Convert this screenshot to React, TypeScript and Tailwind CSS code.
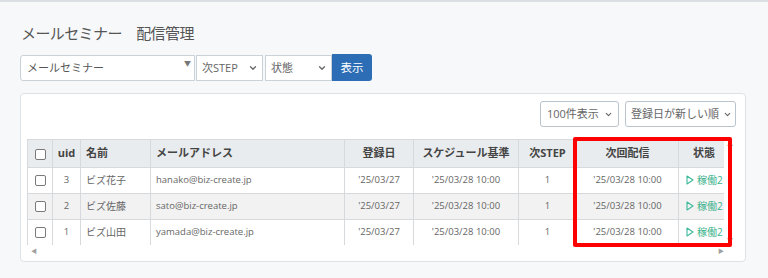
import { ChevronDown } from "lucide-react";

type Row = {
  uid: number;
  name: string;
  email: string;
  created: string;
  schedule: string;
  step: number;
  next: string;
};

const rows: Row[] = [
  { uid: 3, name: "ビズ花子", email: "hanako@biz-create.jp", created: "'25/03/27", schedule: "'25/03/28 10:00", step: 1, next: "'25/03/28 10:00" },
  { uid: 2, name: "ビズ佐藤", email: "sato@biz-create.jp", created: "'25/03/27", schedule: "'25/03/28 10:00", step: 1, next: "'25/03/28 10:00" },
  { uid: 1, name: "ビズ山田", email: "yamada@biz-create.jp", created: "'25/03/27", schedule: "'25/03/28 10:00", step: 1, next: "'25/03/28 10:00" },
];

function Checkbox() {
  return <span className="inline-block w-[11px] h-[11px] border border-[#7a7a7a] rounded-[2px] bg-white align-middle" />;
}

function PlayOutline() {
  return (
    <svg width="8" height="10" viewBox="0 0 8 10" className="inline-block mr-[3px] -mt-[2px]">
      <path d="M1 1 L7 5 L1 9 Z" fill="none" stroke="#3bb99a" strokeWidth="1.1" strokeLinejoin="round" />
    </svg>
  );
}

export default function App() {
  return (
    <div
      className="min-h-screen bg-[#f7f8fa] border-t-2 border-[#dcdfe4] text-[#555]"
      style={{ fontFamily: "'Open Sans', 'Noto Sans CJK JP', sans-serif" }}
    >
      <div className="pl-5 pr-[22px] pt-[21px]">
        {/* Title */}
        <h1 className="text-[15px] leading-[20px] tracking-[-0.6px] pl-[1px] text-[#555]">メールセミナー　配信管理</h1>

        {/* Filter row */}
        <div className="mt-[12px] flex h-[26px] text-[11px]">
          <div className="relative w-[175px] h-full bg-white border border-[#c9d2d9] rounded-l-[3px] flex items-center pl-[6px] text-[#555]">
            メールセミナー
            <span className="absolute right-[3px] top-[3px] text-[7px] text-[#777]">▼</span>
          </div>
          <div className="ml-[1px] w-[67px] h-full bg-white border border-[#c9d2d9] flex items-center justify-between pl-[5px] pr-[4px] text-[#666]">
            次STEP
            <ChevronDown size={10} strokeWidth={3} className="text-[#666]" />
          </div>
          <div className="ml-[2px] w-[67px] h-full bg-white border border-[#c9d2d9] flex items-center justify-between pl-[5px] pr-[4px] text-[#666]">
            状態
            <ChevronDown size={10} strokeWidth={3} className="text-[#666]" />
          </div>
          <button className="w-[40px] h-[27px] -mt-[1px] bg-[#2c6db5] text-white text-[11.5px] rounded-r-[3px]">
            表示
          </button>
        </div>

        {/* Card */}
        <div className="mt-[12px] bg-white border border-[#dde2e6] rounded-[4px] pl-[6px] pr-[9px] pt-[7px] pb-[5px]">
          <div className="flex justify-end gap-[6px] text-[11px] text-[#666]">
            <div className="w-[79px] h-[26px] border border-[#b9c3cc] rounded-[3px] flex items-center justify-between pl-[6px] pr-[5px]">
              100件表示
              <ChevronDown size={9} strokeWidth={3} className="text-[#666]" />
            </div>
            <div className="w-[111px] h-[26px] border border-[#b9c3cc] rounded-[3px] flex items-center justify-between pl-[5px] pr-[3px]">
              登録日が新しい順
              <ChevronDown size={9} strokeWidth={3} className="text-[#666]" />
            </div>
          </div>

          {/* Table area with scrollbars */}
          <div className="relative mt-[12px]">
            <div className="flex">
              <div className="w-[701px] h-[106px] overflow-hidden">
                <table className="table-fixed border-collapse w-[711px] text-[9.5px] text-[#666]">
                  <colgroup>
                    <col className="w-[25px]" />
                    <col className="w-[28px]" />
                    <col className="w-[70px]" />
                    <col className="w-[194px]" />
                    <col className="w-[69px]" />
                    <col className="w-[105px]" />
                    <col className="w-[58px]" />
                    <col className="w-[102px]" />
                    <col className="w-[60px]" />
                  </colgroup>
                  <thead>
                    <tr className="h-[28px] bg-[#e9ecee] text-[11px] font-bold text-[#444]">
                      <th className="border border-[#d6dadd] text-center"><Checkbox /></th>
                      <th className="border border-[#d6dadd] text-center">uid</th>
                      <th className="border border-[#d6dadd] text-left pl-[5px]">名前</th>
                      <th className="border border-[#d6dadd] text-left pl-[5px]">メールアドレス</th>
                      <th className="border border-[#d6dadd] text-center">登録日</th>
                      <th className="border border-[#d6dadd] text-center">スケジュール基準</th>
                      <th className="border border-[#d6dadd] text-center">次STEP</th>
                      <th className="border border-[#d6dadd] text-center">次回配信</th>
                      <th className="border border-[#d6dadd] text-left pl-[14px]">状態</th>
                    </tr>
                  </thead>
                  <tbody>
                    {rows.map((r, i) => (
                      <tr key={r.uid} className={`h-[26px] ${i === 1 ? "bg-[#f2f2f2]" : "bg-white"}`}>
                        <td className="border border-[#d6dadd] text-center"><Checkbox /></td>
                        <td className="border border-[#d6dadd] text-center">{r.uid}</td>
                        <td className="border border-[#d6dadd] pl-[5px] text-[10px]">{r.name}</td>
                        <td className="border border-[#d6dadd] pl-[5px]">{r.email}</td>
                        <td className="border border-[#d6dadd] text-center">{r.created}</td>
                        <td className="border border-[#d6dadd] text-center">{r.schedule}</td>
                        <td className="border border-[#d6dadd] text-center">{r.step}</td>
                        <td className="border border-[#d6dadd] text-center">{r.next}</td>
                        <td className="border border-[#d6dadd] pl-[7px] text-[10px] text-[#3cb38d] whitespace-nowrap">
                          <PlayOutline />稼働2
                        </td>
                      </tr>
                    ))}
                  </tbody>
                </table>
              </div>
              {/* vertical scrollbar */}
              <div className="w-[12px] h-[106px] flex flex-col items-center justify-between py-[2px]">
                <span className="text-[6px] leading-[6px] text-[#a0a0a0]">▲</span>
                <span className="text-[6px] leading-[6px] text-[#a0a0a0]">▼</span>
              </div>
            </div>
            {/* horizontal scrollbar */}
            <div className="w-[701px] h-[11px] flex items-center justify-between px-[4px]">
              <span className="text-[6px] leading-[6px] text-[#a0a0a0]">◀</span>
              <span className="text-[6px] leading-[6px] text-[#a0a0a0]">▶</span>
            </div>

            {/* highlight box */}
            <div className="absolute left-[546px] top-[-2px] w-[159px] h-[110px] border-4 border-[#ff0000] rounded-[2px] pointer-events-none" />
          </div>
        </div>
      </div>
    </div>
  );
}
